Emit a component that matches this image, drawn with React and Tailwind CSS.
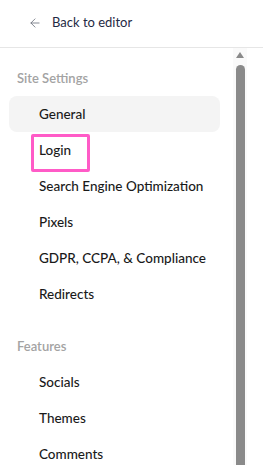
import { ArrowLeft } from "lucide-react";

const sections = [
  {
    title: "Site Settings",
    items: ["General", "Login", "Search Engine Optimization", "Pixels", "GDPR, CCPA, & Compliance", "Redirects"],
  },
  {
    title: "Features",
    items: ["Socials", "Themes", "Comments"],
  },
];

function NavItem({ label, active, marked }) {
  return (
    <div
      className={`relative flex h-9 items-center whitespace-nowrap rounded-lg pl-[30px] text-[13.5px] font-medium text-[#1a1a1a] ${
        active ? "bg-[#f4f4f4]" : ""
      }`}
    >
      {label}
      {marked && (
        <div className="absolute left-[22px] top-[2px] h-[38px] w-[59px] rounded-[2px] border-[3px] border-[#ff5bc7]" />
      )}
    </div>
  );
}

export default function App() {
  return (
    <div
      className="flex h-[465px] w-[263px] flex-col overflow-hidden bg-white"
      style={{ fontFamily: 'Lato, "Liberation Sans", sans-serif' }}
    >
      <div className="flex h-[48px] shrink-0 items-center gap-[10px] border-b border-[#e6e6e6] pl-[28px] pb-[2px]">
        <ArrowLeft size={14} strokeWidth={1.4} className="text-[#6b6f7a]" />
        <span className="text-[13px] text-[#1f2a44]">Back to editor</span>
      </div>
      <div className="flex min-h-0 flex-1">
        <nav className="flex w-[233px] flex-col gap-6 pl-[9px] pr-[13px] pt-5">
          {sections.map((section) => (
            <div key={section.title} className="flex flex-col">
              <div className="mb-2 h-5 px-2 text-[13px] font-semibold leading-5 text-[#a3a3a3]">
                {section.title}
              </div>
              {section.items.map((item) => (
                <NavItem
                  key={item}
                  label={item}
                  active={item === "General"}
                  marked={item === "Login"}
                />
              ))}
            </div>
          ))}
        </nav>
        <div className="flex w-[14px] flex-col items-center bg-[#fafafa] pt-1">
          <div className="h-0 w-0 border-x-[4px] border-b-[6px] border-x-transparent border-b-[#8a8a8a]" />
          <div className="mt-[7px] w-[9px] flex-1 rounded-t-full bg-[#8a8a8a]" />
        </div>
      </div>
    </div>
  );
}
